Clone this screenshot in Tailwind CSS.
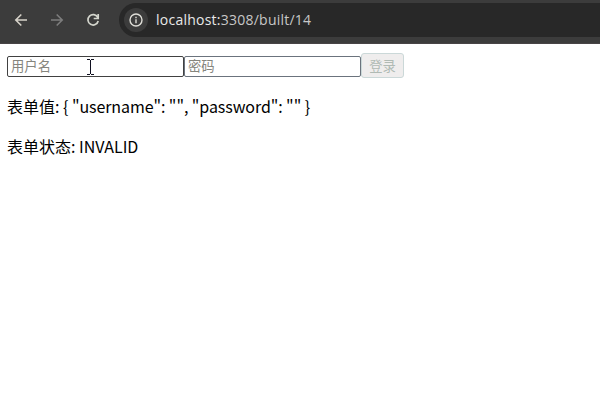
<!DOCTYPE html>
<html lang="zh-CN">
<head>
<meta charset="utf-8">
<title>localhost:3308/built/14</title>
<script src="https://cdn.jsdelivr.net/npm/@tailwindcss/browser@4"></script>
</head>
<body class="relative h-screen overflow-hidden bg-white font-['Noto_Sans_CJK_SC',sans-serif] text-black">
<header class="flex h-11 items-start border-b border-[#484446] bg-[#3c3c3c] pt-[3px]">
  <nav class="flex h-[34px] w-[119px] shrink-0 items-center gap-5 pl-[13px]">
    <svg class="size-4 shrink-0" viewBox="0 0 16 16" fill="none" stroke="#d6d2c9" stroke-width="1.6"><path d="M14 8H3M8.3 2.5 2.8 8l5.500 5.500"/></svg>
    <svg class="size-4 shrink-0" viewBox="0 0 16 16" fill="none" stroke="#7d7d7d" stroke-width="1.6"><path d="M2 8h11M7.700 2.500 13.200 8l-5.500 5.500"/></svg>
    <svg class="size-4 shrink-0" viewBox="0 0 16 16" fill="none" stroke="#d3d5cc" stroke-width="1.700"><path d="M12.700 5.300A5.200 5.200 0 1 0 13.200 9M13.200 2v4.500H8.700"/></svg>
  </nav>
  <div class="flex h-[34px] flex-1 items-center rounded-l-full bg-[#282828] pl-[5px]">
    <div class="flex size-6 items-center justify-center rounded-full bg-[#3c3c3c]">
      <svg class="size-4" viewBox="0 0 16 16" fill="none" stroke="#dfded8" stroke-width="1.400"><circle cx="8" cy="8" r="6"/><path d="M8 7.200v4M8 4.700v1.500"/></svg>
    </div>
    <span class="ml-2 whitespace-nowrap font-['Open_Sans',sans-serif] text-[14px] leading-5 tracking-[0.24px] text-[#c7c7c7]"><span class="text-[#e8e8e8]">localhost:</span>3308/built/14</span>
  </div>
</header>
<main class="pl-[7px] pt-[9px]">
  <form class="flex h-[25px] items-start text-[13.333px]">
    <input aria-label="用户名" placeholder="用户名" class="mt-[3px] h-[21px] w-[177px] rounded-[2px] border border-[#414141] bg-white px-[3px] pb-0.5 placeholder:text-[#85857d]">
    <input aria-label="密码" type="password" placeholder="密码" class="mt-[3px] h-[21px] w-[177px] rounded-[2px] border border-[#6b737d] bg-white px-[3px] pb-0.5 placeholder:text-[#85857d]">
    <button disabled class="flex h-[25px] w-[43px] items-center justify-center rounded-[3px] border border-[#cbd8d8] bg-[#efeded] text-[#b0bab4]">登录</button>
  </form>
  <p class="mt-4 text-base leading-6">表单值: <span class="tracking-[-0.08px]">{ "username": "", "password": "" }</span></p>
  <p class="mt-4 text-base leading-6">表单状态: INVALID</p>
</main>
<svg class="absolute left-[86px] top-[59px] h-4 w-2" viewBox="0 0 8 16" fill="none" stroke="#101020" shape-rendering="crispEdges"><path d="M1 .5h3M5 .5h3M4.500 1v14M1 15.500h3M5 15.500h3"/></svg>
</body>
</html>
